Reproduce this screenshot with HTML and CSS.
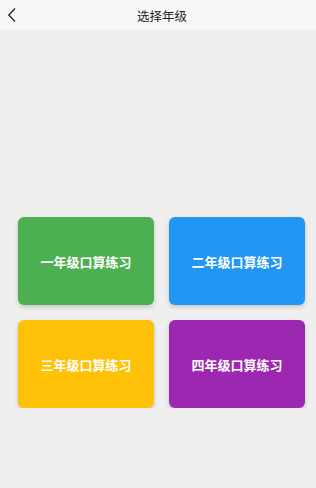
FILE: index.html
```html
<!DOCTYPE html>
<html lang="zh">
<head>
<meta charset="utf-8">
<link rel="stylesheet" href="styles.css">
</head>
<body>
<div class="header">
  <div class="back">
    <svg width="10" height="16" viewBox="0 0 10 16"><path d="M8 1.5 L1.8 8 L8 14.5" fill="none" stroke="#222" stroke-width="1.3"/></svg>
  </div>
  <div class="title">选择年级</div>
</div>
<div class="content">
  <div class="grid">
    <div class="card green">一年级口算练习</div>
    <div class="card blue">二年级口算练习</div>
    <div class="card amber">三年级口算练习</div>
    <div class="card purple">四年级口算练习</div>
  </div>
</div>
</body>
</html>
```
FILE: styles.css
```css
html, body {
  margin: 0;
  padding: 0;
  background: #efefef;
  font-family: "Noto Sans CJK SC", "Noto Sans", sans-serif;
}
.header {
  height: 30px;
  background: #f7f7f7;
  display: flex;
  align-items: center;
  position: relative;
}
.back {
  width: 30px;
  padding-left: 7px;
  display: flex;
  align-items: center;
  box-sizing: border-box;
}
.back svg { display: block; }
.title {
  flex: 1;
  text-align: center;
  font-size: 12.5px;
  color: #222;
  padding-right: 22px;
}
.content {
  padding: 187px 11px 0 18px;
}
.grid {
  display: grid;
  grid-template-columns: 136px 136px;
  column-gap: 15px;
  row-gap: 15px;
}
.card {
  height: 88px;
  border-radius: 6px;
  display: flex;
  align-items: center;
  justify-content: center;
  color: #fff;
  font-size: 13px;
  font-weight: bold;
  box-shadow: 0 2px 4px rgba(0,0,0,0.18);
}
.green { background: #4caf50; }
.blue { background: #2196f3; }
.amber { background: #ffc107; }
.purple { background: #9c27b0; }
```
